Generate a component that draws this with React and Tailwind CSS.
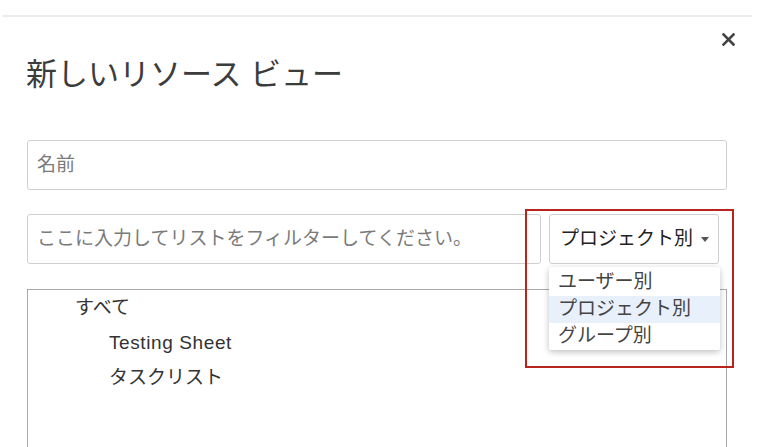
import React from "react";

const jp = { fontFamily: '"Liberation Sans", "Noto Sans CJK JP", sans-serif' };

const options = ["ユーザー別", "プロジェクト別", "グループ別"];

const App = () => {
  const selected = "プロジェクト別";

  return (
    <div className="relative h-[447px] w-[768px] overflow-hidden bg-white" style={jp}>
      {/* ---------- edge of the page behind the dialog ---------- */}
      <div className="ml-[2px] mt-[15px] h-[2px] w-[750px] bg-[#ececec]" />

      {/* ---------- header ---------- */}
      <div className="flex justify-end pr-[33px] pt-[16px]">
        <svg width="13" height="13" viewBox="0 0 13 13" className="text-[#444]">
          <path d="M1.5 1.5 L11.5 11.5 M11.5 1.5 L1.5 11.5" stroke="currentColor" strokeWidth="2.6" strokeLinecap="square" />
        </svg>
      </div>
      <h1 className="ml-[26px] mt-[11px] text-[31px] leading-[36px] text-[#3c3c3c]">
        新しいリソース ビュー
      </h1>

      {/* ---------- form ---------- */}
      <div className="ml-[27px] mt-[47px] w-[700px]">
        <div className="flex h-[50px] items-center rounded-[3px] border border-[#cfcfcf] pl-[9px] text-[19px] text-[#7a7a7a]">
          名前
        </div>

        <div className="mt-[24px] flex gap-[8px]">
          <div className="flex h-[50px] w-[514px] items-center rounded-[3px] border border-[#cfcfcf] pl-[9px] text-[19px] text-[#7a7a7a]">
            ここに入力してリストをフィルターしてください。
          </div>
          <div className="flex h-[50px] w-[170px] items-center justify-between rounded-[3px] border border-[#cfcfcf] pl-[10px] pr-[9px] text-[19px] text-[#222]">
            {selected}
            <span className="mt-[1px] h-0 w-0 border-x-[4px] border-t-[5px] border-x-transparent border-t-[#555]" />
          </div>
        </div>

        {/* ---------- resource tree ---------- */}
        <div className="mt-[25px] h-[200px] border-x border-t border-[#a9a9a9] pt-[1px] text-[19px] text-[#333]">
          <div className="flex h-[35px] items-center pl-[47px]">すべて</div>
          <div className="flex h-[35px] items-center pl-[81px] tracking-[0.6px]">Testing Sheet</div>
          <div className="flex h-[34px] items-center pl-[81px]">タスクリスト</div>
        </div>
      </div>

      {/* ---------- open dropdown ---------- */}
      <div className="absolute left-[549px] top-[267px] w-[171px] rounded-[2px] bg-white pt-[2px] shadow-[0_2px_6px_rgba(0,0,0,0.25)]">
        {options.map((opt) => (
          <div
            key={opt}
            className={
              opt === selected
                ? "flex h-[27px] items-center bg-[#e8f0fb] pl-[9px] text-[19px] text-[#444]"
                : "flex h-[27px] items-center pl-[9px] text-[19px] text-[#444]"
            }
          >
            {opt}
          </div>
        ))}
      </div>

      {/* ---------- red highlight frame ---------- */}
      <div className="pointer-events-none absolute left-[525px] top-[209px] h-[159px] w-[209px] border-2 border-[#b8231c]" />
    </div>
  );
};

export default App;
